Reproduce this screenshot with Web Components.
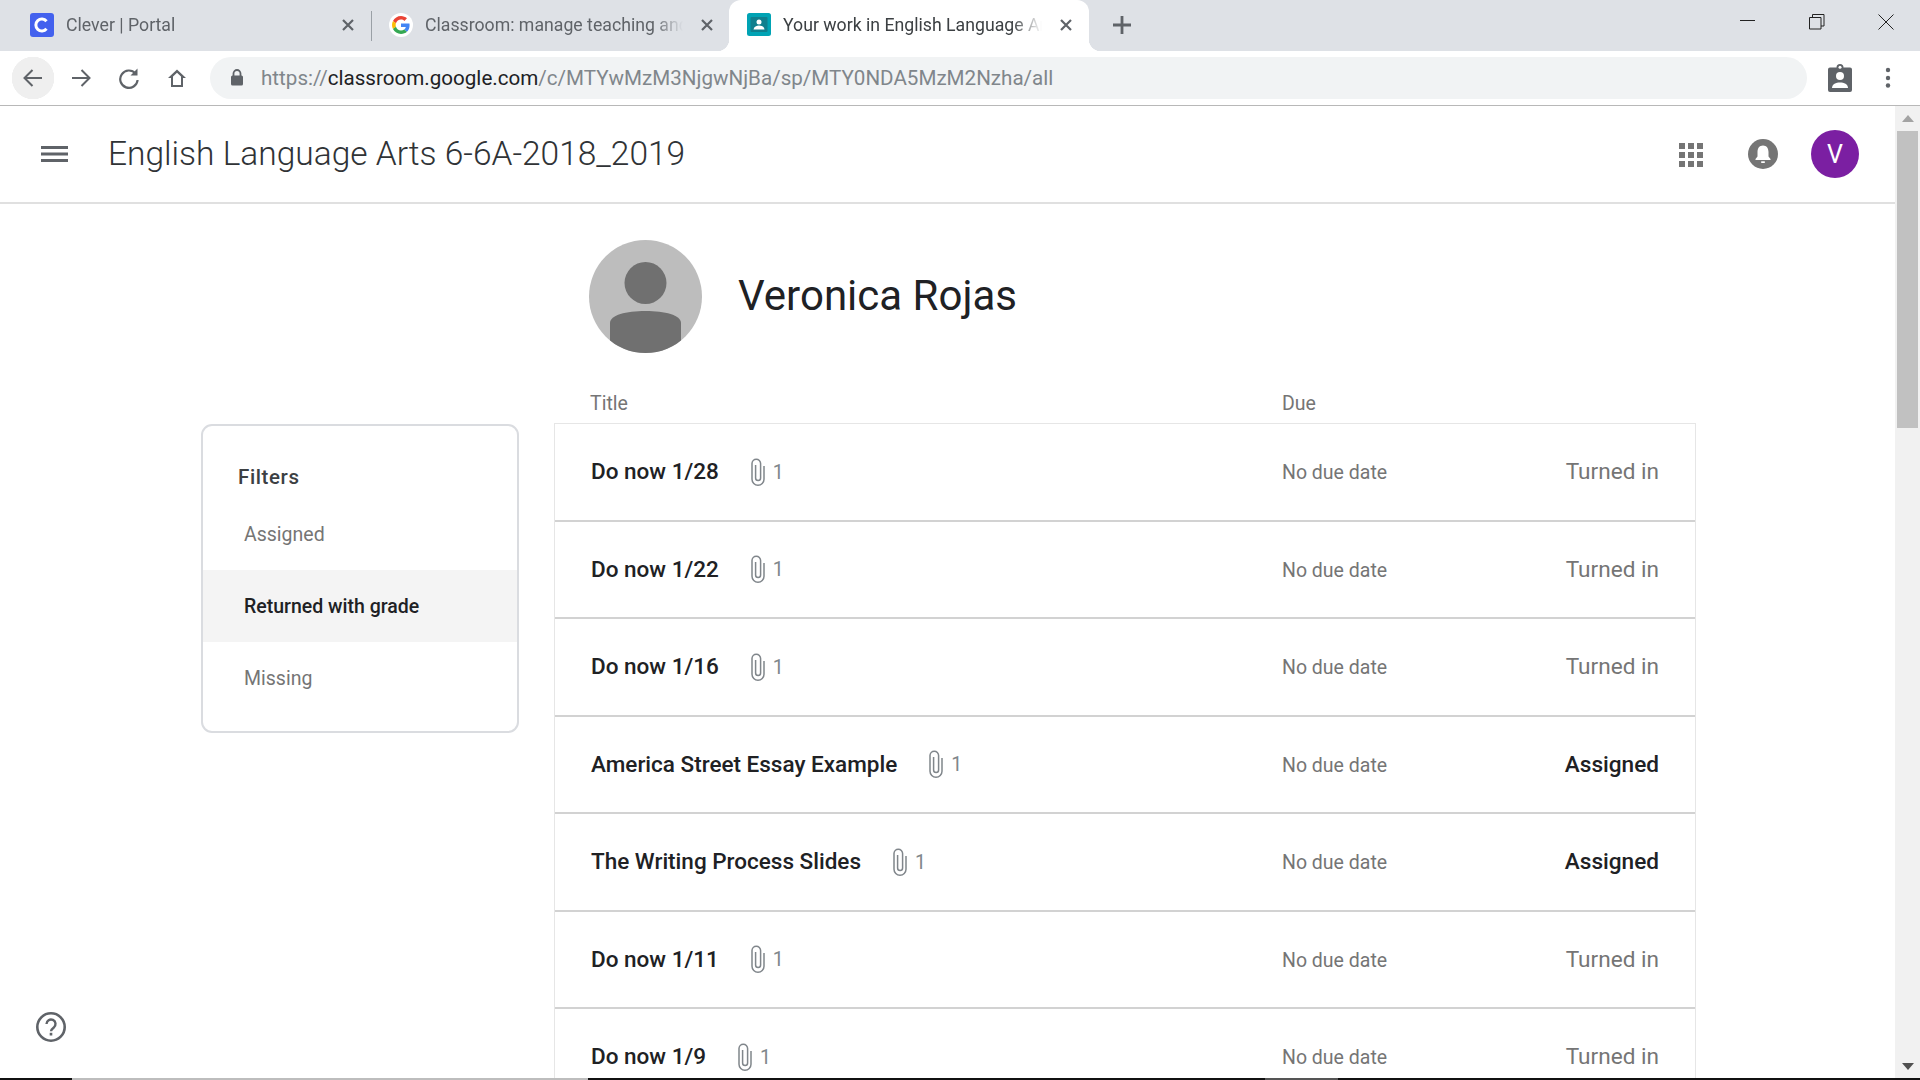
<!DOCTYPE html>
<html lang="en">
<head>
<meta charset="utf-8">
<title>Your work in English Language Arts</title>
<style>
    html, body { margin: 0; height: 100%; overflow: hidden; background: #fff; }
    body { display: flex; flex-direction: column; height: 1080px; font-family: Roboto, "Liberation Sans", sans-serif; }
    .page { flex: 1; display: flex; min-height: 0; position: relative; }
    .content { flex: 1; display: flex; flex-direction: column; min-width: 0; }
</style>
</head>
<body>
    <tab-strip>
        <browser-tab>
            <svg slot="icon" width="24" height="24" viewBox="0 0 24 24"><rect width="24" height="24" rx="3" fill="#4361ee"/><path d="M16.5 8.2a6 6 0 1 0 0 7.6" fill="none" stroke="#fff" stroke-width="3"/></svg>
            Clever | Portal
        </browser-tab>
        <browser-tab divider>
            <svg slot="icon" width="24" height="24" viewBox="0 0 48 48"><circle cx="24" cy="24" r="24" fill="#fff"/><g transform="translate(6 6) scale(.75)"><path fill="#ea4335" d="M24 9.5c3.5 0 6.700 1.300 9.100 3.500l6.800-6.800C35.800 2.400 30.300 0 24 0 14.600 0 6.500 5.400 2.600 13.200l7.900 6.200C12.400 13.700 17.700 9.500 24 9.500z"/><path fill="#4285f4" d="M46.900 24.500c0-1.600-.1-3.100-.4-4.500H24v9h12.900c-.6 3-2.200 5.500-4.700 7.200l7.700 6c4.500-4.200 7-10.300 7-17.700z"/><path fill="#fbbc05" d="M10.500 28.600c-.5-1.400-.8-3-.8-4.600s.3-3.200.8-4.600l-7.900-6.200C.9 16.500 0 20.100 0 24s.9 7.500 2.600 10.800l7.900-6.200z"/><path fill="#34a853" d="M24 48c6.500 0 11.900-2.100 15.900-5.800l-7.700-6c-2.100 1.400-4.900 2.300-8.200 2.300-6.300 0-11.600-4.200-13.500-9.900l-7.900 6.200C6.500 42.600 14.600 48 24 48z"/></g></svg>
            Classroom: manage teaching and learning
        </browser-tab>
        <browser-tab active>
            <svg slot="icon" width="24" height="24" viewBox="0 0 24 24"><rect width="24" height="23" rx="2.500" fill="#00a3b4"/><rect x="3.500" y="4" width="17" height="15" rx="1" fill="#0f7f8e"/><circle cx="12" cy="9" r="2.500" fill="#fff"/><path d="M6.500 16.500c.5-3 3-4 5.500-4s5 1 5.500 4z" fill="#fff"/></svg>
            Your work in English Language Arts 6-6A-2018_2019
        </browser-tab>
        <svg class="plus" width="18" height="18" viewBox="0 0 18 18"><path d="M9 0v18M0 9h18" stroke="#5f6368" stroke-width="2.800" fill="none"/></svg>
    </tab-strip>
    <browser-toolbar url-host="classroom.google.com" url-path="/c/MTYwMzM3NjgwNjBa/sp/MTY0NDA5MzM2Nzha/all"></browser-toolbar>

    <div class="page">
        <div class="content">
            <course-header>English Language Arts 6-6A-2018_2019</course-header>
            <work-page student="Veronica Rojas">
                <filter-card slot="filters">
                    <filter-item>Assigned</filter-item>
                    <filter-item selected>Returned with grade</filter-item>
                    <filter-item>Missing</filter-item>
                </filter-card>
                <work-row>Do now 1/28</work-row>
                <work-row>Do now 1/22</work-row>
                <work-row>Do now 1/16</work-row>
                <work-row status="Assigned">America Street Essay Example</work-row>
                <work-row status="Assigned">The Writing Process Slides</work-row>
                <work-row>Do now 1/11</work-row>
                <work-row>Do now 1/9</work-row>
            </work-page>
        </div>
        <page-scrollbar></page-scrollbar>
        <help-button></help-button>
    </div>
    <bottom-edge></bottom-edge>

<script>
// Row of browser tabs plus the window buttons on the right
class TabStrip extends HTMLElement {
    constructor() {
        super();
        this.attachShadow({ mode: "open" });
        this.shadowRoot.innerHTML = `
        <style>
            :host { display: flex; align-items: stretch; height: 51px; padding-left: 12px; background: #dee1e6; flex: none; box-sizing: border-box; }
            .tabs { display: flex; align-items: center; flex: 1; }
            ::slotted(.plus) { margin: 0 0 2px 24px; }
            .win { display: flex; align-items: flex-start; }
            .win button { all: unset; display: flex; justify-content: center; width: 69px; padding-top: 14px; }
        </style>
        <div class="tabs"><slot></slot></div>
        <div class="win">
            <button><svg width="16" height="16" viewBox="0 0 16 16"><path d="M0 6.500h15" stroke="#222" fill="none"/></svg></button>
            <button><svg width="16" height="16" viewBox="0 0 16 16"><path d="M.5 3.500h11.500v11.500h-11.500zM3.500 3.500v-3h11.500v11.500h-3" stroke="#222" fill="none"/></svg></button>
            <button><svg width="16" height="16" viewBox="0 0 16 16"><path d="M.5.500l15 15M15.500.500l-15 15" stroke="#222" fill="none"/></svg></button>
        </div>`;
    }
}

class BrowserTab extends HTMLElement {
    constructor() {
        super();
        this.attachShadow({ mode: "open" });
        this.shadowRoot.innerHTML = `
        <style>
            :host { display: flex; align-items: center; gap: 12px; width: 359px; height: 51px; padding: 0 17px 2px 18px; box-sizing: border-box; position: relative; flex: none;
                    font: 17.700px Roboto, "Noto Sans", sans-serif; color: #5f6368; }
            :host([divider]) { width: 358px; padding-right: 16px; }
            :host([active]) { background: #fff; color: #3c4043; width: 360px; border-radius: 12px 12px 0 0; }
            :host([active])::before, :host([active])::after { content: ""; position: absolute; bottom: 0; width: 12px; height: 12px; }
            :host([active])::before { left: -12px; background: radial-gradient(circle at 0 0, transparent 12px, #fff 12.500px); }
            :host([active])::after { right: -12px; background: radial-gradient(circle at 100% 0, transparent 12px, #fff 12.500px); }
            :host([divider])::before { content: ""; position: absolute; left: 0; top: 11px; height: 30px; width: 1px; background: #9aa0a6; }
            .label { flex: 1; white-space: nowrap; overflow: hidden; min-width: 0;
                     -webkit-mask-image: linear-gradient(to right, #000 calc(100% - 30px), transparent); mask-image: linear-gradient(to right, #000 calc(100% - 30px), transparent); }
            slot[name=icon] { display: flex; }
            svg.x { flex: none; margin-left: 6px; }
        </style>
        <slot name="icon"></slot>
        <span class="label"><slot></slot></span>
        <svg class="x" width="12" height="12" viewBox="0 0 12 12"><path d="M1 1l10 10M11 1L1 11" stroke="#5f6368" stroke-width="2.200" fill="none"/></svg>`;
    }
}

// Back/forward/reload/home, the address bar and the profile buttons
class BrowserToolbar extends HTMLElement {
    constructor() {
        super();
        this.attachShadow({ mode: "open" });
        const host = this.getAttribute("url-host");
        const path = this.getAttribute("url-path");
        this.shadowRoot.innerHTML = `
        <style>
            :host { display: flex; align-items: center; height: 55px; box-sizing: border-box; padding: 0 9px 1px 9px; background: #fff; border-bottom: 1px solid #b8b8b8; flex: none; }
            .btn { width: 48px; height: 42px; display: flex; align-items: center; justify-content: center; flex: none; }
            .btn.first { background: radial-gradient(circle at 50% 50%, #efefef 21px, transparent 21.500px); }
            .omni { flex: 1; height: 42px; margin: 0 10px 0 9px; background: #f1f3f4; border-radius: 21px; display: flex; align-items: center; padding-left: 21px; box-sizing: border-box; min-width: 0; }
            .url { margin: 1px 0 0 18px; font: 20.600px Roboto, "Noto Sans", sans-serif; color: #80868b; white-space: nowrap; }
            .url b { font-weight: 400; color: #202124; }
            .btn.small { width: 47px; }
        </style>
        <div class="btn first"><svg width="24" height="24" viewBox="0 0 24 24"><path d="M21 12H4M11.500 4l-8 8 8 8" stroke="#5f6368" stroke-width="2" fill="none"/></svg></div>
        <div class="btn"><svg width="24" height="24" viewBox="0 0 24 24"><path d="M3 12h17M12.500 4l8 8-8 8" stroke="#5f6368" stroke-width="2" fill="none"/></svg></div>
        <div class="btn"><svg width="24" height="24" viewBox="0 0 24 24"><path d="M18.500 7.500A8.700 8.700 0 1 0 20.600 14" stroke="#5f6368" stroke-width="2.200" fill="none"/><path d="M20.500 2.500v7h-7z" fill="#5f6368"/></svg></div>
        <div class="btn"><svg width="24" height="24" viewBox="0 0 24 24"><path d="M12 3.500L3 12h3v9h12v-9h3zM8 19v-8.500l4-3.800 4 3.800V19z" fill="#5f6368" fill-rule="evenodd"/></svg></div>
        <div class="omni">
            <svg width="12" height="17" viewBox="0 0 12 17"><path d="M2.500 7V4.500a3.500 3.500 0 0 1 7 0V7" stroke="#5f6368" stroke-width="1.800" fill="none"/><rect y="6.500" width="12" height="10" rx="1.500" fill="#5f6368"/></svg>
            <span class="url">https://<b>${host}</b>${path}</span>
        </div>
        <div class="btn small" style="padding-right:2px;box-sizing:border-box"><svg width="24" height="29" viewBox="0 0 24 29"><path d="M2 4.500h6.500a3.500 3.500 0 0 1 7 0H22a2 2 0 0 1 2 2V27a2 2 0 0 1-2 2H2a2 2 0 0 1-2-2V6.500a2 2 0 0 1 2-2z" fill="#5f6368"/><circle cx="12" cy="4.200" r="1.500" fill="#fff"/><circle cx="12" cy="13" r="4" fill="#fff"/><path d="M4 25c0-3.800 4-5.500 8-5.500s8 1.700 8 5.500z" fill="#fff"/></svg></div>
        <div class="btn small"><svg width="6" height="22" viewBox="0 0 6 22"><circle cx="3" cy="3" r="2.200" fill="#5f6368"/><circle cx="3" cy="11" r="2.200" fill="#5f6368"/><circle cx="3" cy="18.500" r="2.200" fill="#5f6368"/></svg></div>`;
    }
}

// Classroom's top bar with the course name
class CourseHeader extends HTMLElement {
    constructor() {
        super();
        this.attachShadow({ mode: "open" });
        this.shadowRoot.innerHTML = `
        <style>
            :host { display: flex; align-items: center; height: 98px; box-sizing: border-box; border-bottom: 2px solid #e0e0e0; padding: 0 36px 0 41px; flex: none; }
            .menu { width: 27px; height: 16px; margin-right: 40px; flex: none; }
            h1 { flex: 1; margin: 0 0 2px; font: 300 33.500px Roboto, sans-serif; color: #303336; white-space: nowrap; }
            .apps { display: grid; grid-template-columns: repeat(3, 6px); gap: 3px; margin: 1px 45px 0 0; }
            .apps i { width: 6px; height: 6px; background: #757575; }
            .bell { margin-right: 33px; }
            .user { width: 48px; height: 48px; border-radius: 50%; background: #7b1fa2; color: #fff; font: 400 25px Roboto, sans-serif; display: flex; align-items: center; justify-content: center; }
        </style>
        <svg class="menu" viewBox="0 0 27 16"><path d="M0 1.500h27M0 8h27M0 14.500h27" stroke="#5f6368" stroke-width="2.800" fill="none"/></svg>
        <h1><slot></slot></h1>
        <div class="apps"><i></i><i></i><i></i><i></i><i></i><i></i><i></i><i></i><i></i></div>
        <svg class="bell" width="30" height="30" viewBox="0 0 30 30"><circle cx="15" cy="15" r="15" fill="#757575"/><path d="M15 6.500c-3.600 0-5.500 2.800-5.500 6.500v4.500L7.500 20v1h15v-1l-2-2.500V13c0-3.700-1.900-6.500-5.500-6.500z" fill="#fff"/><rect x="13.200" y="22.300" width="3.600" height="1.700" fill="#fff"/></svg>
        <div class="user">V</div>`;
    }
}

// Two columns: filters on the left, student name and the work list on the right
class WorkPage extends HTMLElement {
    constructor() {
        super();
        this.attachShadow({ mode: "open" });
        const student = this.getAttribute("student");
        this.shadowRoot.innerHTML = `
        <style>
            :host { display: flex; flex: 1; min-height: 0; overflow: hidden; padding-left: 201px; gap: 35px; }
            .left { width: 318px; flex: none; padding-top: 220px; }
            .right { width: 1142px; flex: none; padding-top: 36px; }
            .student { display: flex; align-items: center; gap: 36px; height: 112px; margin-left: 35px; }
            .student svg { flex: none; }
            .student h2 { margin: 0 0 2px; font: 400 42px Roboto, sans-serif; color: #202124; }
            .cols { display: grid; grid-template-columns: 692px 1fr; height: 71px; padding: 37px 0 0 36px; box-sizing: border-box; font: 400 19.500px/30px Roboto, sans-serif; color: #757575; }
            .list { border: solid #e6e6e6; border-width: 1px 1px 0; }
        </style>
        <div class="left"><slot name="filters"></slot></div>
        <div class="right">
            <div class="student">
                <svg width="113" height="113" viewBox="0 0 113 113"><defs><clipPath id="disc"><circle cx="56.500" cy="56.500" r="56.500"/></clipPath></defs><circle cx="56.500" cy="56.500" r="56.500" fill="#bdbdbd"/><g clip-path="url(#disc)" fill="#707070"><circle cx="56.500" cy="43" r="21"/><path d="M21 113V83c0-8 16-12 35.500-12S92 75 92 83v30z"/></g></svg>
                <h2>${student}</h2>
            </div>
            <div class="cols"><span>Title</span><span>Due</span></div>
            <div class="list"><slot></slot></div>
        </div>`;
    }
}

class FilterCard extends HTMLElement {
    constructor() {
        super();
        this.attachShadow({ mode: "open" });
        this.shadowRoot.innerHTML = `
        <style>
            :host { display: block; box-sizing: border-box; height: 309px; border: 2px solid #dadce0; border-radius: 11px; overflow: hidden; }
            h3 { margin: 0; padding: 36px 0 6px 35px; font: 500 20.500px/30px Roboto, sans-serif; letter-spacing: .6px; color: #3c4043; }
        </style>
        <h3>Filters</h3>
        <slot></slot>`;
    }
}

class FilterItem extends HTMLElement {
    constructor() {
        super();
        this.attachShadow({ mode: "open" });
        this.shadowRoot.innerHTML = `
        <style>
            :host { display: flex; align-items: center; height: 72px; padding-left: 41px; font: 400 19.500px Roboto, sans-serif; color: #757575; }
            :host([selected]) { background: #f4f4f4; font-weight: 500; color: #202124; }
        </style>
        <slot></slot>`;
    }
}

// One piece of classwork; status defaults to "Turned in"
class WorkRow extends HTMLElement {
    constructor() {
        super();
        this.attachShadow({ mode: "open" });
        const status = this.getAttribute("status") || "Turned in";
        this.shadowRoot.innerHTML = `
        <style>
            :host { display: grid; grid-template-columns: 691px 1fr auto; align-items: center; height: 97.500px; box-sizing: border-box; padding: 0 36px 0 36px; border-bottom: 2px solid #d2d2d2; }
            .title { display: flex; align-items: center; }
            .name { font: 500 22.500px Roboto, sans-serif; color: #202124; margin-bottom: 1px; }
            svg { margin-left: 32px; flex: none; }
            .count { margin: 1px 0 0 8px; font: 400 19.500px Roboto, sans-serif; color: #80868b; }
            .due { font: 400 19.500px Roboto, sans-serif; color: #757575; margin-top: 2px; }
            .status { font: 400 22.600px Roboto, sans-serif; color: #757575; }
            .status.assigned { font-weight: 500; color: #202124; }
        </style>
        <div class="title">
            <span class="name"><slot></slot></span>
            <svg width="14" height="28" viewBox="0 0 14 28"><path d="M13 8v13.200a6 6 0 0 1-12 0V5.500a4.300 4.300 0 0 1 8.600 0V20a2.500 2.500 0 0 1-5 0V7" fill="none" stroke="#80868b" stroke-width="1.500"/></svg>
            <span class="count">1</span>
        </div>
        <div class="due">No due date</div>
        <div class="status ${status === "Assigned" ? "assigned" : ""}">${status}</div>`;
    }
}

class PageScrollbar extends HTMLElement {
    constructor() {
        super();
        this.attachShadow({ mode: "open" });
        this.shadowRoot.innerHTML = `
        <style>
            :host { display: flex; flex-direction: column; align-items: center; width: 25px; flex: none; background: #f1f1f1; }
            svg { flex: none; }
            .up { margin-top: 9px; }
            .thumb { width: 21px; height: 297px; margin-top: 9px; background: #c1c1c1; }
            .down { margin-top: auto; margin-bottom: 8px; }
        </style>
        <svg class="up" width="12" height="7" viewBox="0 0 12 7"><path d="M6 0l6 7H0z" fill="#a3a3a3"/></svg>
        <div class="thumb"></div>
        <svg class="down" width="12" height="7" viewBox="0 0 12 7"><path d="M0 0h12L6 7z" fill="#505050"/></svg>`;
    }
}

// Floating help button in the corner
class HelpButton extends HTMLElement {
    constructor() {
        super();
        this.attachShadow({ mode: "open" });
        this.shadowRoot.innerHTML = `
        <style>
            :host { position: absolute; left: 36px; bottom: 36px; width: 30px; height: 30px; }
            svg { display: block; }
        </style>
        <svg width="30" height="30" viewBox="0 0 30 30"><circle cx="15" cy="15" r="13.700" fill="none" stroke="#5f6368" stroke-width="2.600"/><path d="M10.500 12a4.500 4.500 0 1 1 7.300 3.500c-1.600 1.200-2.800 2-2.800 3.800" fill="none" stroke="#5f6368" stroke-width="2.400"/><rect x="13.700" y="20.800" width="2.600" height="2.700" fill="#5f6368"/></svg>`;
    }
}

// Dark strip the screenshot caught along the bottom of the window
class BottomEdge extends HTMLElement {
    constructor() {
        super();
        this.attachShadow({ mode: "open" });
        this.shadowRoot.innerHTML = `
        <style>
            :host { display: flex; height: 2px; flex: none; background: #111; }
            .a { width: 72px; } .b { width: 516px; background: #bdbdbd; } .c { width: 677px; } .d { width: 73px; background: #555; }
        </style>
        <div class="a"></div><div class="b"></div><div class="c"></div><div class="d"></div>`;
    }
}

customElements.define("tab-strip", TabStrip);
customElements.define("browser-tab", BrowserTab);
customElements.define("browser-toolbar", BrowserToolbar);
customElements.define("course-header", CourseHeader);
customElements.define("work-page", WorkPage);
customElements.define("filter-card", FilterCard);
customElements.define("filter-item", FilterItem);
customElements.define("work-row", WorkRow);
customElements.define("page-scrollbar", PageScrollbar);
customElements.define("help-button", HelpButton);
customElements.define("bottom-edge", BottomEdge);
</script>
</body>
</html>
